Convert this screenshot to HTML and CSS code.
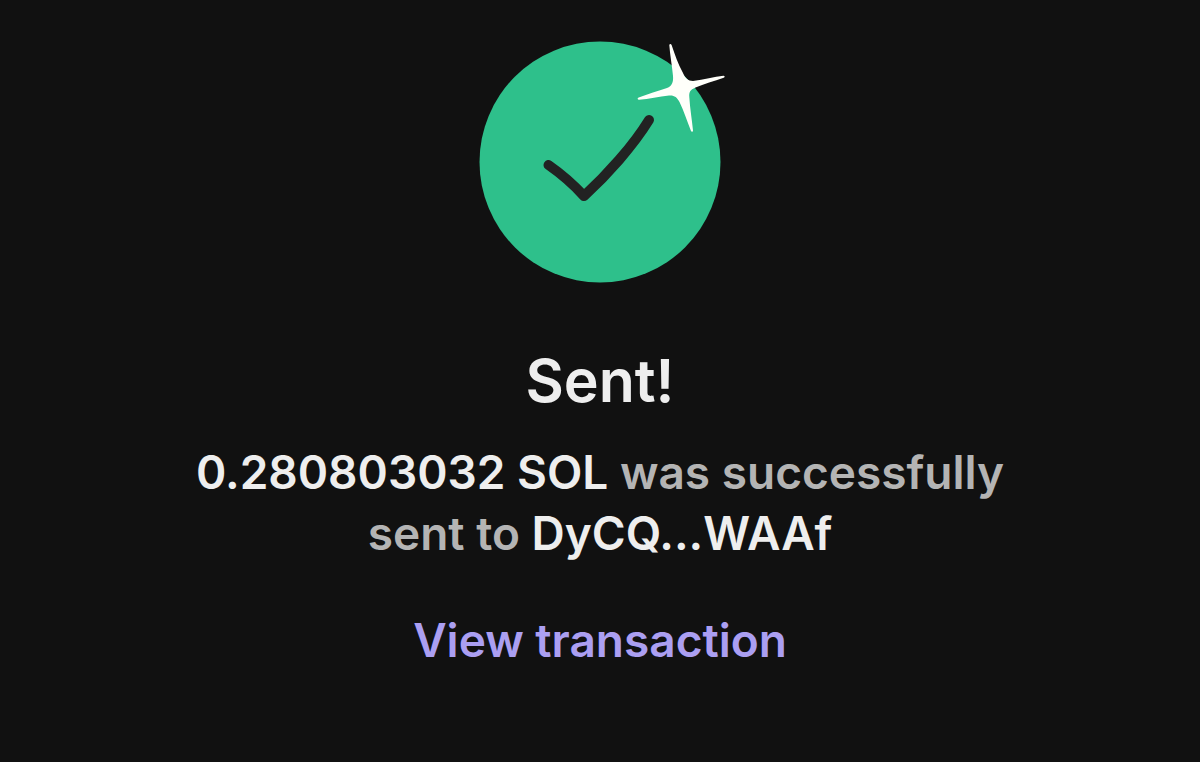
FILE: index.html
```html
<!DOCTYPE html>
<html lang="en">
<head>
	<meta charset="UTF-8">
	<title>Sent</title>
	<link rel="stylesheet" href="styles.css">
</head>
<body>
	<main class="sent">
		<svg class="sent-icon" viewBox="470 30 260 260" aria-hidden="true">
			<circle class="disc" cx="600" cy="162" r="120.5"/>
			<path class="check" d="M548.5 165C560 173 573 184 584 196C607 175 633 146 649 120"/>
			<path class="spark" d="M669.3 45C669.6 43.6 671 43.6 671.6 45C675 55 678 64 682.5 72C685 78 688 81 693 81C704 79.5 714 77 723.5 75.8C725 75.8 725 77.2 723.7 77.8C714 81 704 84 695.5 87.5C690 90 689 92 689.3 97C690 109 692 120 693 130.5C693 132 691.5 132.2 691 131C687 121 684 111 679.5 102C677 97 674 95 669 95.5C659 96.5 649 99 639 99.8C637.3 99.8 637.2 98.2 638.7 97.6C648 94 658 91 667 88C672 86 673.5 82 673 76C672 65 670 55 669.3 45Z"/>
		</svg>
		<h1>Sent!</h1>
		<p class="message"><strong>0.280803032 SOL</strong> was successfully sent to <strong>DyCQ...WAAf</strong></p>
		<a class="link" href="#">View transaction</a>
	</main>
</body>
</html>
```

FILE: styles.css
```css
body {
	margin: 0;
	background-color: #111111;
	font-family: Inter, "Liberation Sans", sans-serif;
	font-weight: 600;
}

.sent {
	display: flex;
	flex-direction: column;
	align-items: center;
	padding: 30px 24px;
	text-align: center;
}

.sent-icon {
	width: 260px;
	height: 260px;
}

.disc {
	fill: #2ec08b;
}

.check {
	fill: none;
	stroke: #222222;
	stroke-width: 10px;
	stroke-linecap: round;
	stroke-linejoin: round;
}

.spark {
	fill: #fffffa;
}

h1 {
	margin: 56px 0 0;
	color: #eeeeee;
	font-size: 59px;
	font-weight: 600;
	line-height: 70px;
}

.message {
	max-width: 840px;
	margin: 26px 0 0;
	color: #b4b4b4;
	font-size: 46px;
	line-height: 61px;
}

.message strong {
	color: #eeeeee;
	font-weight: 600;
}

.link {
	margin-top: 46px;
	color: #ab9ff2;
	font-size: 46px;
	line-height: 61px;
	text-decoration: none;
}
```
